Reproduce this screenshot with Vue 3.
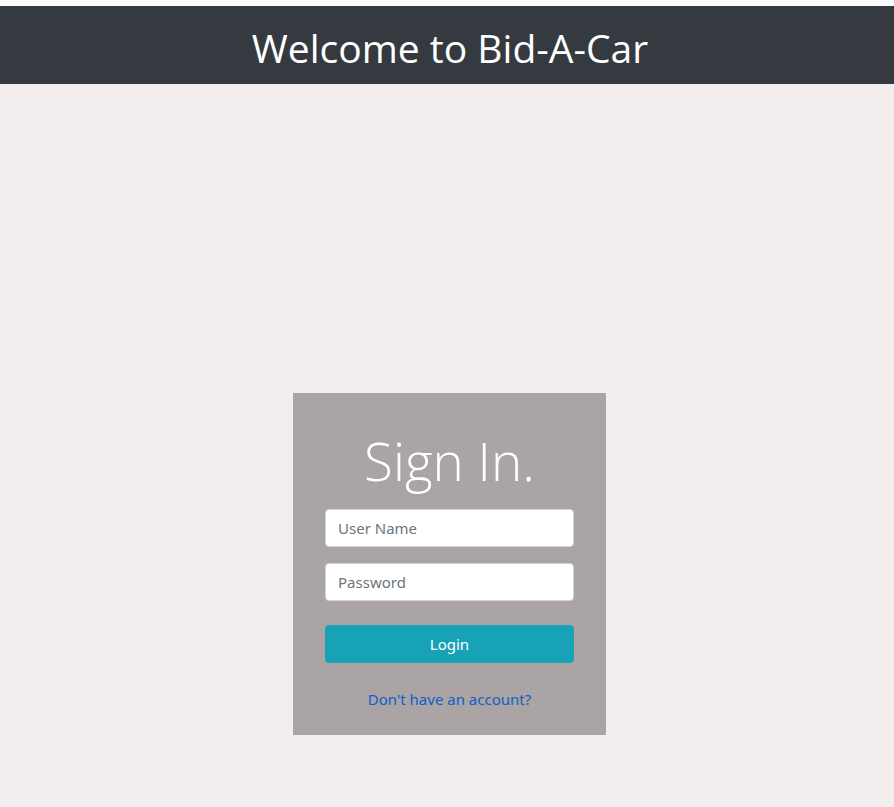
<script setup>
import { ref } from 'vue'

const userName = ref('')
const password = ref('')
</script>

<template>
  <div class="page">
    <header class="banner">
      <h1>Welcome to Bid-A-Car</h1>
    </header>
    <main class="content">
      <form class="card" @submit.prevent>
        <h2>Sign In.</h2>
        <input v-model="userName" class="field" type="text" placeholder="User Name" aria-label="User Name" autocomplete="username" />
        <input v-model="password" class="field" type="password" placeholder="Password" aria-label="Password" autocomplete="current-password" />
        <button class="login" type="submit">Login</button>
        <a class="signup" href="#signup">Don't have an account?</a>
      </form>
    </main>
  </div>
</template>

<style>
body {
  margin: 0;
  background: #f3eded;
}
</style>

<style scoped>
.page {
  box-sizing: border-box;
  min-height: 100vh;
  display: flex;
  flex-direction: column;
  border-top: 6px solid #fafafc;
  font-family: "Noto Sans", "Open Sans", sans-serif;
  font-size: 15px;
  line-height: 24px;
}

.banner {
  padding: 18px 16px 12px 22px;
  background: #343a40;
  color: #fff;
  text-align: center;
}

h1,
h2 {
  font-family: "Open Sans", "Noto Sans", sans-serif;
}

h1 {
  margin: 0;
  font-size: 39px;
  font-weight: 400;
  line-height: 48px;
}

.content {
  flex: 1;
  display: flex;
  align-items: flex-end;
  justify-content: center;
  padding: 72px 0 72px 5px;
}

.card {
  box-sizing: border-box;
  width: 35vw;
  min-width: 260px;
  display: flex;
  flex-direction: column;
  padding: 30px 32px 24px;
  background: #aaa4a4;
}

h2 {
  margin: 0 0 10px;
  color: #fff;
  font-size: 53px;
  font-weight: 300;
  line-height: 76px;
  text-align: center;
}

.field {
  box-sizing: border-box;
  width: 100%;
  height: 38px;
  margin: 0 0 16px;
  padding: 6px 12px;
  border: 1px solid #ced4da;
  border-radius: 4px;
  background: #fff;
  color: #495057;
  font: inherit;
}

.field::placeholder {
  color: #6c757d;
  opacity: 1;
}

.login {
  height: 38px;
  margin: 8px 0 24px;
  padding: 6px 12px;
  border: 1px solid #17a2b8;
  border-radius: 4px;
  background: #17a2b8;
  color: #fff;
  font: inherit;
  cursor: pointer;
}

.signup {
  align-self: center;
  color: #0f60c8;
  text-decoration: none;
}

.signup:hover {
  text-decoration: underline;
}
</style>
